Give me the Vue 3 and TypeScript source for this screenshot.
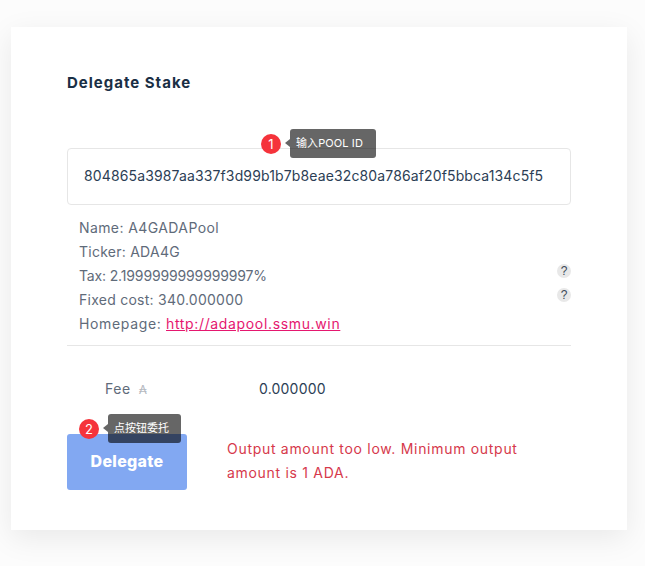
<script setup lang="ts">
const rows = [
  { text: 'Name: A4GADAPool', help: false, tone: 'wide' },
  { text: 'Ticker: ADA4G', help: false, tone: 'mid' },
  { text: 'Tax: 2.1999999999999997%', help: true, tone: 'tight' },
  { text: 'Fixed cost: 340.000000', help: true, tone: 'mid' },
]
</script>

<template>
  <main class="page">
    <section class="card">
      <h1 class="title">Delegate Stake</h1>

      <div class="field">
        <span class="guide guide-one">
          <span class="badge">1</span>
          <span class="tip">输入POOL ID</span>
        </span>
        <div class="input">804865a3987aa337f3d99b1b7b8eae32c80a786af20f5bbca134c5f5</div>
      </div>

      <div class="info">
        <div v-for="row in rows" :key="row.text" class="row">
          <span :class="row.tone">{{ row.text }}</span>
          <span v-if="row.help" class="help">?</span>
        </div>
        <div class="row">
          <span class="home">Homepage: <a class="link" href="#">http://adapool.ssmu.win</a></span>
        </div>
      </div>

      <div class="fee">
        <span class="fee-label"><span class="fee-name">Fee</span><span class="ada">₳</span></span>
        <span class="fee-value">0.000000</span>
      </div>

      <div class="action">
        <div class="button-wrap">
          <span class="guide guide-two">
            <span class="badge">2</span>
            <span class="tip">点按钮委托</span>
          </span>
          <button class="button" type="button">Delegate</button>
        </div>
        <p class="error">Output amount too low. Minimum output amount is 1 ADA.</p>
      </div>
    </section>
  </main>
</template>

<style scoped>
.page {
  height: 566px;
  box-sizing: border-box;
  padding: 27px 18px 0 11px;
  background: #fcfcfc;
  overflow: hidden;
  font-family: "Inter", "Noto Sans CJK SC", sans-serif;
}
.card {
  height: 503px;
  box-sizing: border-box;
  padding: 47px 56px 0;
  background: #fff;
  box-shadow: 0 8px 28px rgba(0, 0, 0, 0.08);
}
.title {
  margin: 0;
  height: 18px;
  font-size: 15px;
  line-height: 18px;
  font-weight: 700;
  letter-spacing: 1px;
  color: #1a2f45;
}
.field {
  position: relative;
  margin-top: 56px;
}
.input {
  height: 57px;
  box-sizing: border-box;
  padding-left: 16px;
  border: 1px solid #e6e6e6;
  border-radius: 4px;
  font-size: 14px;
  line-height: 53px;
  letter-spacing: 0.13px;
  color: #2c3e55;
  white-space: nowrap;
}
.guide {
  position: absolute;
  z-index: 2;
  display: flex;
  align-items: center;
  gap: 9px;
}
.guide-one {
  left: 194px;
  top: -19px;
}
.guide-one .tip {
  padding-right: 13px;
  letter-spacing: 0.1px;
}
.guide-two {
  left: 12px;
  top: -20px;
}
.badge {
  width: 20px;
  height: 20px;
  border-radius: 50%;
  background: #f5333b;
  color: #fff;
  font-size: 13px;
  line-height: 20px;
  text-align: center;
}
.tip {
  position: relative;
  height: 29px;
  padding: 0 12px 0 6px;
  border-radius: 3px;
  background: rgba(0, 0, 0, 0.6);
  color: #fff;
  font-size: 11px;
  line-height: 29px;
  white-space: nowrap;
}
.tip::before {
  content: "";
  position: absolute;
  left: -5px;
  top: 10px;
  border-style: solid;
  border-width: 4px 5px 4px 0;
  border-color: transparent rgba(0, 0, 0, 0.6) transparent transparent;
}
.info {
  margin-top: 11px;
  padding: 0 0 9px 12px;
  border-bottom: 1px solid #e6e6e6;
  font-size: 14px;
  line-height: 24px;
  color: #5f6b7a;
}
.row {
  display: flex;
  justify-content: space-between;
  align-items: flex-start;
  height: 24px;
}
.wide {
  letter-spacing: 0.4px;
}
.mid {
  letter-spacing: 0.25px;
}
.tight {
  letter-spacing: -0.15px;
}
.home {
  letter-spacing: 0.65px;
}
.help {
  width: 14px;
  height: 14px;
  border-radius: 50%;
  background: #e8e8e8;
  color: #3c4858;
  font-family: "Liberation Sans", sans-serif;
  font-size: 12px;
  line-height: 14px;
  text-align: center;
}
.link {
  color: #e5176f;
  text-decoration: underline;
}
.fee {
  display: flex;
  height: 88px;
  padding: 33px 0 0 38px;
  box-sizing: border-box;
  font-size: 14px;
  line-height: 20px;
}
.fee-label {
  width: 154px;
  color: #5f6b7a;
}
.fee-name {
  letter-spacing: 0.6px;
}
.ada {
  margin-left: 8px;
  color: #b5b9bf;
  font-size: 12px;
}
.fee-value {
  color: #2c3e55;
  letter-spacing: 0.2px;
}
.action {
  display: flex;
  gap: 40px;
}
.button-wrap {
  position: relative;
  flex: none;
}
.button {
  display: block;
  width: 120px;
  height: 56px;
  padding: 0 0 2px;
  border: 0;
  border-radius: 3px;
  background: #82a8f2;
  color: #fff;
  font-family: inherit;
  font-size: 16px;
  font-weight: 800;
  letter-spacing: 0.3px;
}
.error {
  width: 310px;
  margin: 3px 0 0;
  font-size: 14px;
  line-height: 24px;
  letter-spacing: 0.7px;
  color: #d6394b;
}
</style>
